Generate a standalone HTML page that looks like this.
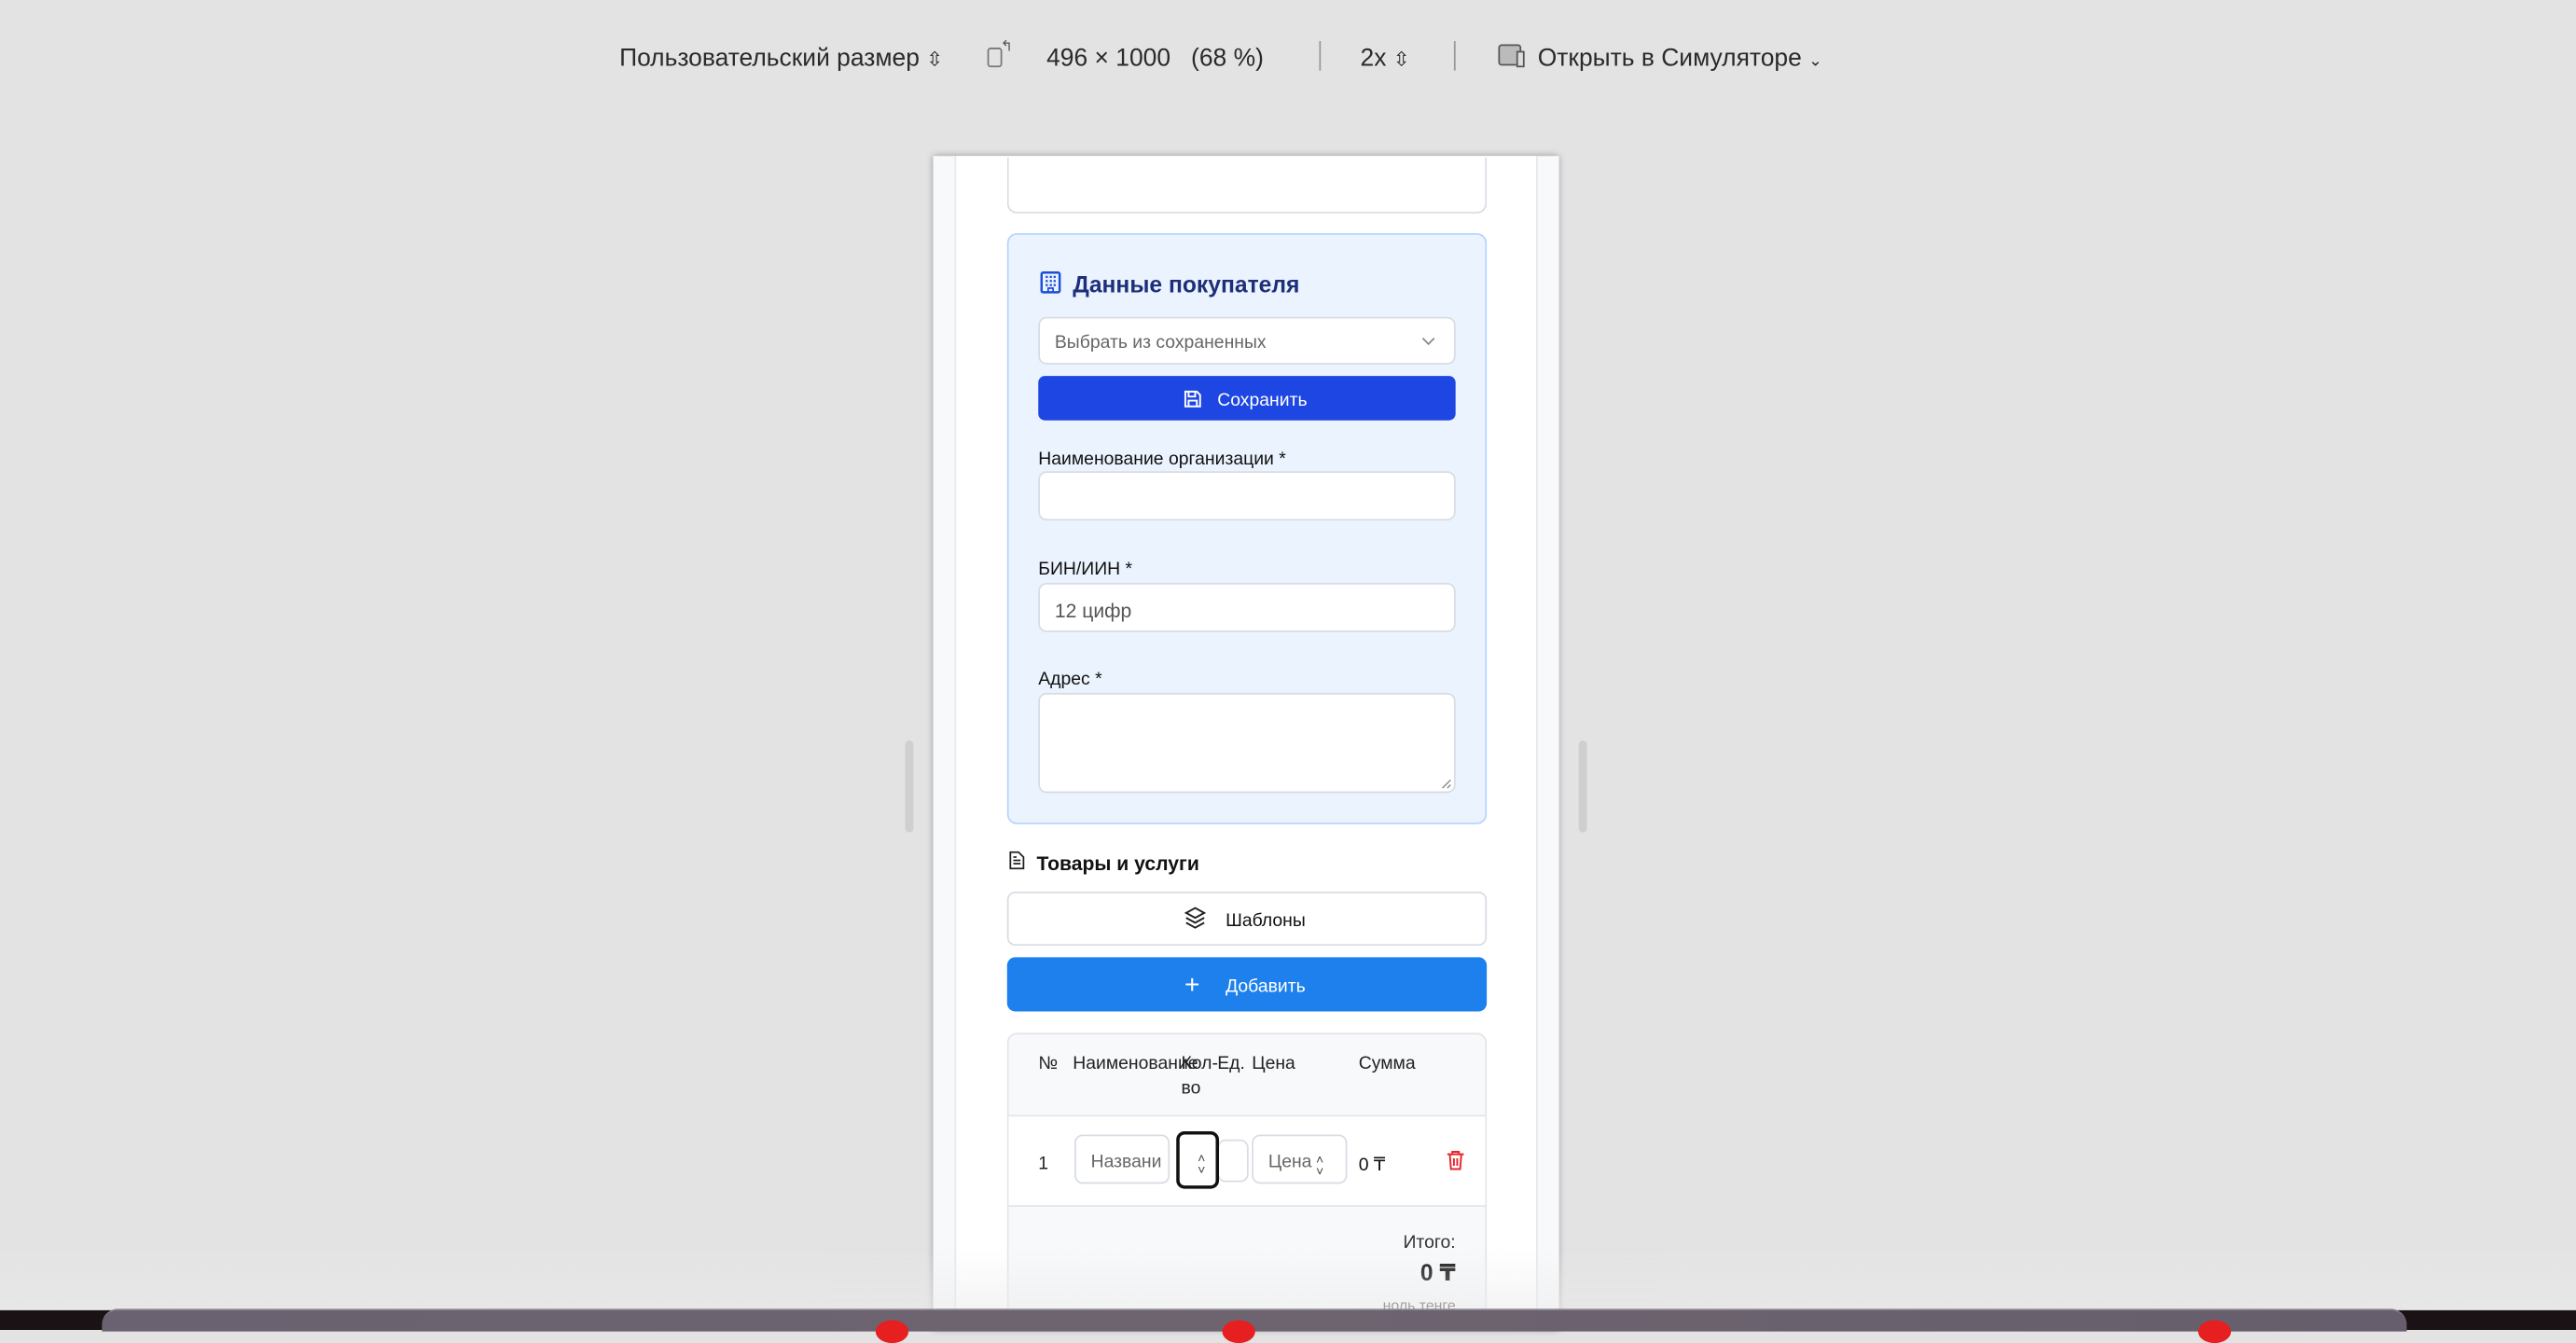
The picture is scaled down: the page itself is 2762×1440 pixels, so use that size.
<!DOCTYPE html>
<html><head><meta charset="utf-8"><style>
*{box-sizing:border-box;margin:0;padding:0}
html,body{width:2762px;height:1426px;overflow:hidden;background:#e3e3e3}
#w{position:absolute;left:0;top:0;width:1568px;height:810px;transform:scale(1.76148,1.7605);transform-origin:0 0;font-family:"Liberation Sans","DejaVu Sans",sans-serif;color:#111}
.a{position:absolute}
.tb{font-size:15px;color:#2a2a2a;top:26.5px;white-space:nowrap}
.inp{position:absolute;background:#fff;border:1px solid #d8dde4;border-radius:5px}
.lbl{position:absolute;font-size:11px;color:#111;white-space:nowrap;margin-top:1.5px}
.t{white-space:nowrap;margin-top:1.5px}
</style></head><body><div id="w">
<div class="a tb" style="left:377px">Пользовательский размер <span style="font-size:12px">⇳</span></div>
<div class="a" style="left:601px;top:29px;width:9px;height:12px;border:1.3px solid #777;border-radius:2px"></div>
<div class="a" style="left:609px;top:23px;font-size:9px;color:#555">↰</div>
<div class="a tb" style="left:637px">496 × 1000 &nbsp; (68 %)</div>
<div class="a" style="left:803px;top:25px;width:1px;height:18px;background:#999"></div>
<div class="a tb" style="left:828px">2x <span style="font-size:12px">⇳</span></div>
<div class="a" style="left:885px;top:25px;width:1px;height:18px;background:#999"></div>
<div class="a" style="left:912px;top:27px;width:14px;height:13px;border:1.5px solid #555;border-radius:2px;background:#bbb"></div>
<div class="a" style="left:923px;top:31px;width:5px;height:10px;border:1px solid #555;background:#ddd"></div>
<div class="a tb" style="left:936px">Открыть в Симуляторе <span style="font-size:10px">⌄</span></div>
<div class="a" style="left:551px;top:451px;width:5px;height:56px;background:#cfcfcf;border-radius:3px"></div>
<div class="a" style="left:961px;top:451px;width:5px;height:56px;background:#cfcfcf;border-radius:3px"></div>
<div class="a" style="left:568px;top:95px;width:381px;height:715px;background:#f8f9fb;box-shadow:0 0 4px rgba(0,0,0,.35)"></div>
<div class="a" style="left:581px;top:95px;width:355px;height:715px;background:#fff;border-left:1px solid #e6e8ec;border-right:1px solid #e6e8ec"></div>
<div class="inp" style="left:613px;top:96px;width:292px;height:34px;border-top:none;border-radius:0 0 6px 6px"></div>
<div class="a" style="left:613px;top:142px;width:292px;height:360px;background:#ebf3fe;border:1px solid #b6d5fb;border-radius:6px"></div>
<svg class="a" style="left:633px;top:165px" width="13" height="14" viewBox="0 0 13 14"><rect x="1" y="1" width="11" height="12" rx="1" fill="none" stroke="#1d4ed8" stroke-width="1.4"/><g fill="#1d4ed8"><rect x="3.5" y="3" width="1.3" height="1.3"/><rect x="6" y="3" width="1.3" height="1.3"/><rect x="8.3" y="3" width="1.3" height="1.3"/><rect x="3.5" y="5.5" width="1.3" height="1.3"/><rect x="6" y="5.5" width="1.3" height="1.3"/><rect x="8.3" y="5.5" width="1.3" height="1.3"/><rect x="3.5" y="8" width="1.3" height="1.3"/><rect x="6" y="8" width="1.3" height="1.3"/><rect x="8.3" y="8" width="1.3" height="1.3"/></g><rect x="5" y="10.5" width="3" height="2.5" fill="none" stroke="#1d4ed8" stroke-width="1"/></svg>
<div class="a t" style="left:653px;top:163px;font-size:14px;font-weight:bold;color:#1e2f7a">Данные покупателя</div>
<div class="inp" style="left:632px;top:193px;width:254px;height:29px"></div>
<div class="a t" style="left:642px;top:201px;font-size:11px;color:#666">Выбрать из сохраненных</div>
<svg class="a" style="left:865px;top:205px" width="9" height="6"><path d="M1 1l3.5 3.5L8 1" fill="none" stroke="#888" stroke-width="1"/></svg>
<div class="a" style="left:632px;top:229px;width:254px;height:27px;background:#1d46e2;border-radius:4px"></div>
<svg class="a" style="left:720px;top:237px" width="12" height="12" viewBox="0 0 12 12"><path d="M1.5 1.5h7l2 2v7h-9z M3.5 1.5v3h4v-3 M3.5 10.5v-3.5h5v3.5" fill="none" stroke="#fff" stroke-width="1.1"/></svg>
<div class="a t" style="left:741px;top:236px;font-size:11px;color:#fff">Сохранить</div>
<div class="lbl" style="left:632px;top:272px">Наименование организации *</div>
<div class="inp" style="left:632px;top:287px;width:254px;height:30px"></div>
<div class="lbl" style="left:632px;top:339px">БИН/ИИН *</div>
<div class="inp" style="left:632px;top:355px;width:254px;height:30px"></div>
<div class="a t" style="left:642px;top:363px;font-size:12px;color:#555">12 цифр</div>
<div class="lbl" style="left:632px;top:406px">Адрес *</div>
<div class="inp" style="left:632px;top:422px;width:254px;height:61px"></div>
<svg class="a" style="left:877px;top:474px" width="7" height="7"><path d="M1 6L6 1M4 6L6 4" stroke="#888" stroke-width=".8"/></svg>
<svg class="a" style="left:614px;top:518px" width="10" height="12" viewBox="0 0 10 12"><path d="M1 1h5l3 3v7H1z M2.8 6h4.4 M2.8 8h4.4 M2.8 4h2" fill="none" stroke="#222" stroke-width="1"/></svg>
<div class="a t" style="left:631px;top:517px;font-size:12px;font-weight:bold">Товары и услуги</div>
<div class="inp" style="left:613px;top:543px;width:292px;height:33px;border-radius:5px"></div>
<svg class="a" style="left:721px;top:552px" width="13" height="14" viewBox="0 0 13 14"><path d="M6.5 1L12 4 6.5 7 1 4z M1 7l5.5 3L12 7 M1 10l5.5 3 5.5-3" fill="none" stroke="#222" stroke-width="1.1"/></svg>
<div class="a t" style="left:746px;top:553px;font-size:11px;color:#111">Шаблоны</div>
<div class="a" style="left:613px;top:583px;width:292px;height:33px;background:#1e80ec;border-radius:5px"></div>
<div class="a t" style="left:721px;top:590px;font-size:16px;color:#fff;font-weight:300">+</div>
<div class="a t" style="left:746px;top:593px;font-size:11px;color:#fff">Добавить</div>
<div class="a" style="left:613px;top:629px;width:292px;height:181px;background:#f8f9fb;border:1px solid #e3e6ea;border-radius:6px 6px 0 0;overflow:hidden">
 <div class="a" style="left:0;top:49px;width:292px;height:56px;background:#fff;border-top:1px solid #e3e6ea;border-bottom:1px solid #e3e6ea"></div>
</div>
<div class="a t" style="left:632px;top:640px;font-size:11px;color:#222">№</div>
<div class="a t" style="left:653px;top:640px;font-size:11px;color:#222">Наименование</div>
<div class="a t" style="left:719px;top:640px;font-size:11px;color:#222">Кол-</div>
<div class="a t" style="left:719px;top:655px;font-size:11px;color:#222">во</div>
<div class="a t" style="left:741px;top:640px;font-size:11px;color:#222">Ед.</div>
<div class="a t" style="left:762px;top:640px;font-size:11px;color:#222">Цена</div>
<div class="a t" style="left:827px;top:640px;font-size:11px;color:#222">Сумма</div>
<div class="a t" style="left:632px;top:701px;font-size:11px;color:#222">1</div>
<div class="inp" style="left:654px;top:691px;width:58px;height:30px;overflow:hidden"><span class="a t" style="left:9px;top:8px;font-size:11px;color:#666">Названи</span></div>
<div class="inp" style="left:741px;top:694px;width:19px;height:26px"></div>
<div class="a" style="left:716px;top:689px;width:26px;height:35px;border:2px solid #111;border-radius:5px;background:#fff"></div>
<div class="a t" style="left:729px;top:700px;font-size:8px;color:#444;line-height:7px">˄<br>˅</div>
<div class="inp" style="left:762px;top:691px;width:58px;height:30px"><span class="a t" style="left:9px;top:8px;font-size:11px;color:#666">Цена</span><span class="a t" style="left:38px;top:9px;font-size:8px;color:#444;line-height:7px">˄<br>˅</span></div>
<div class="a t" style="left:827px;top:701px;font-size:11px;color:#111">0 ₸</div>
<svg class="a" style="left:880px;top:700px" width="12" height="13" viewBox="0 0 12 13"><path d="M1 3h10 M4 3V1.5h4V3 M2.5 3l.7 9h5.6l.7-9 M5 5.5v4.5 M7 5.5v4.5" fill="none" stroke="#e5262b" stroke-width="1.1"/></svg>
<div class="a t" style="right:682px;top:749px;font-size:11px;color:#333">Итого:</div>
<div class="a t" style="right:682px;top:765px;font-size:14px;font-weight:bold;color:#111">0 ₸</div>
<div class="a t" style="right:682px;top:788px;font-size:9px;color:#555">ноль тенге</div>
<div class="a" style="left:0;top:760px;width:1568px;height:38px;background:linear-gradient(rgba(235,235,235,0),rgba(235,235,235,.55))"></div>
<div class="a" style="left:0;top:798px;width:1568px;height:12px;background:#1a1214"></div>
<div class="a" style="left:62px;top:797px;width:1403px;height:14px;background:linear-gradient(90deg,#6a6270,#6e6470 50%,#665e6c);border-radius:10px 10px 0 0;border-top:1px solid #8a8290"></div>
<div class="a" style="left:533px;top:804px;width:20px;height:14px;border-radius:50%;background:#e62020"></div>
<div class="a" style="left:744px;top:804px;width:20px;height:14px;border-radius:50%;background:#e62020"></div>
<div class="a" style="left:1338px;top:804px;width:20px;height:14px;border-radius:50%;background:#e62020"></div>
</div></body></html>
